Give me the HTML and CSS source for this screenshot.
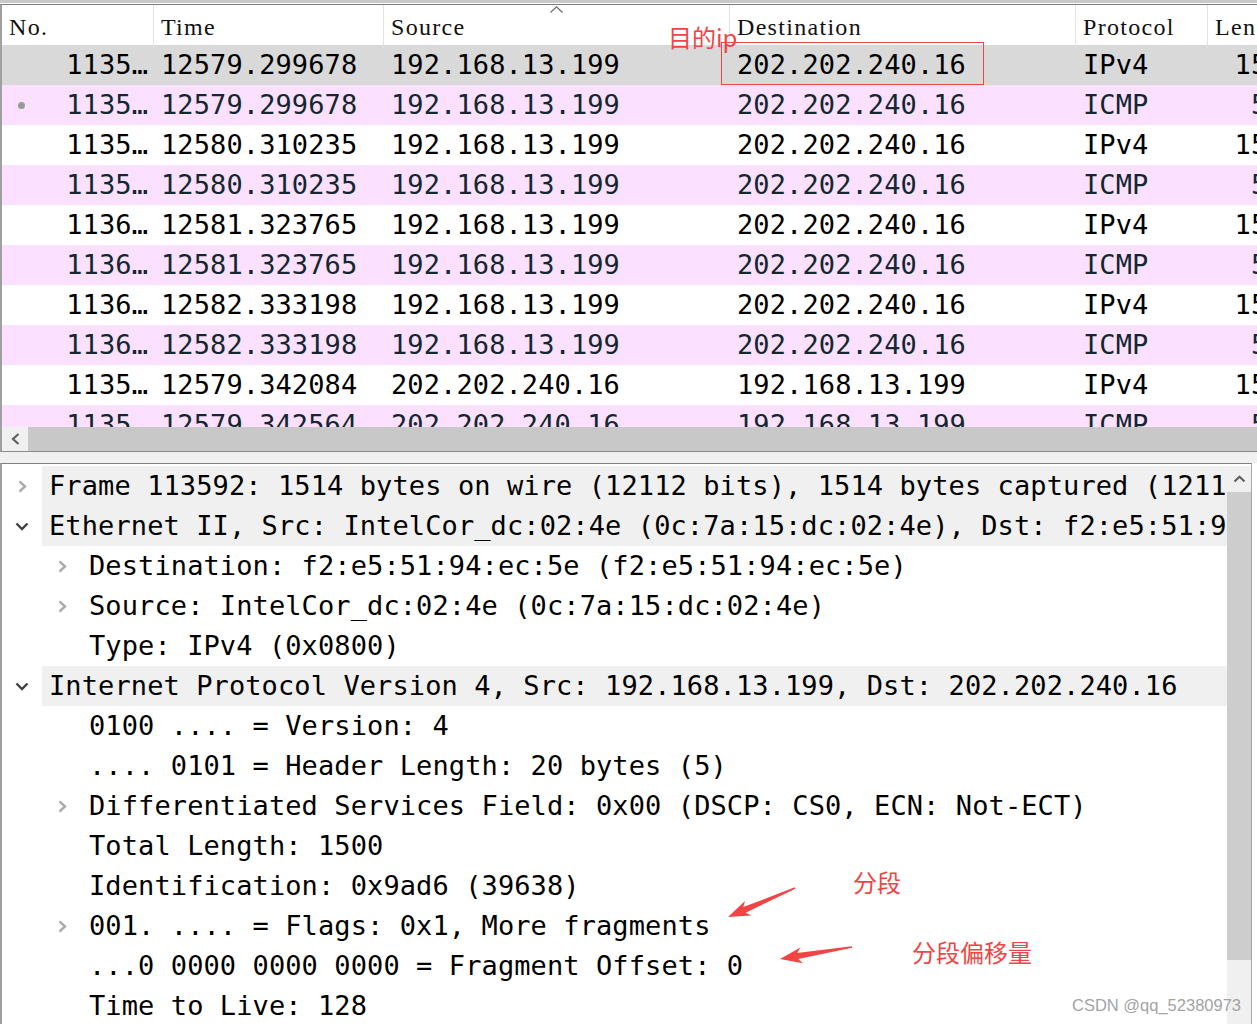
FILE: index.html
```html
<!DOCTYPE html>
<html lang="zh-CN">
<head>
    <meta charset="UTF-8">
    <title>Wireshark - IPv4 fragments</title>
    <link rel="stylesheet" href="styles.css">
</head>
<body>
    <div class="window">
        <div class="top-strip"></div>

        <!-- packet list -->
        <div class="packet-list">
            <div class="list-header">
                <div class="col">No.</div>
                <div class="col">Time</div>
                <div class="col sorted">Source
                    <svg class="sort-arrow" width="13" height="7" viewBox="0 0 13 7"><polyline points="0.5,6.5 6.5,0.8 12.5,6.5" fill="none" stroke="#6e6e6e" stroke-width="1.2"/></svg>
                </div>
                <div class="col">Destination</div>
                <div class="col">Protocol</div>
                <div class="col">Length</div>
            </div>
            <div class="list-body">
                <div class="pkt selected">
                    <span class="no">1135…</span><span>12579.299678</span><span>192.168.13.199</span><span>202.202.240.16</span><span>IPv4</span><span class="len">1514</span>
                </div>
                <div class="pkt icmp">
                    <span class="no"><i class="rel-dot"></i>1135…</span><span>12579.299678</span><span>192.168.13.199</span><span>202.202.240.16</span><span>ICMP</span><span class="len">562</span>
                </div>
                <div class="pkt">
                    <span class="no">1135…</span><span>12580.310235</span><span>192.168.13.199</span><span>202.202.240.16</span><span>IPv4</span><span class="len">1514</span>
                </div>
                <div class="pkt icmp">
                    <span class="no">1135…</span><span>12580.310235</span><span>192.168.13.199</span><span>202.202.240.16</span><span>ICMP</span><span class="len">562</span>
                </div>
                <div class="pkt">
                    <span class="no">1136…</span><span>12581.323765</span><span>192.168.13.199</span><span>202.202.240.16</span><span>IPv4</span><span class="len">1514</span>
                </div>
                <div class="pkt icmp">
                    <span class="no">1136…</span><span>12581.323765</span><span>192.168.13.199</span><span>202.202.240.16</span><span>ICMP</span><span class="len">562</span>
                </div>
                <div class="pkt">
                    <span class="no">1136…</span><span>12582.333198</span><span>192.168.13.199</span><span>202.202.240.16</span><span>IPv4</span><span class="len">1514</span>
                </div>
                <div class="pkt icmp">
                    <span class="no">1136…</span><span>12582.333198</span><span>192.168.13.199</span><span>202.202.240.16</span><span>ICMP</span><span class="len">562</span>
                </div>
                <div class="pkt">
                    <span class="no">1135…</span><span>12579.342084</span><span>202.202.240.16</span><span>192.168.13.199</span><span>IPv4</span><span class="len">1514</span>
                </div>
                <div class="pkt icmp">
                    <span class="no">1135…</span><span>12579.342564</span><span>202.202.240.16</span><span>192.168.13.199</span><span>ICMP</span><span class="len">562</span>
                </div>
            </div>
            <div class="hscroll">
                <div class="hscroll-btn">
                    <svg width="9" height="12" viewBox="0 0 9 12"><polyline points="7.5,1 2,6 7.5,11" fill="none" stroke="#606060" stroke-width="2.2"/></svg>
                </div>
                <div class="hscroll-thumb"></div>
            </div>
        </div>

        <div class="splitter"></div>

        <!-- packet details -->
        <div class="details">
            <div class="tree">
                <div class="node shaded">
                    <span class="toggle"><svg width="9" height="13" viewBox="0 0 9 13"><polyline points="1.5,1.5 7,6.5 1.5,11.5" fill="none" stroke="#ababab" stroke-width="2.4"/></svg></span>
                    <span class="label">Frame 113592: 1514 bytes on wire (12112 bits), 1514 bytes captured (12112 bits) on interface 0</span>
                </div>
                <div class="node shaded">
                    <span class="toggle"><svg width="14" height="9" viewBox="0 0 14 9"><polyline points="1.5,1.5 7,7 12.5,1.5" fill="none" stroke="#404040" stroke-width="2.4"/></svg></span>
                    <span class="label">Ethernet II, Src: IntelCor_dc:02:4e (0c:7a:15:dc:02:4e), Dst: f2:e5:51:94:ec:5e (f2:e5:51:94:ec:5e)</span>
                </div>
                <div class="node">
                    <span class="indent"></span>
                    <span class="toggle"><svg width="9" height="13" viewBox="0 0 9 13"><polyline points="1.5,1.5 7,6.5 1.5,11.5" fill="none" stroke="#ababab" stroke-width="2.4"/></svg></span>
                    <span class="label">Destination: f2:e5:51:94:ec:5e (f2:e5:51:94:ec:5e)</span>
                </div>
                <div class="node">
                    <span class="indent"></span>
                    <span class="toggle"><svg width="9" height="13" viewBox="0 0 9 13"><polyline points="1.5,1.5 7,6.5 1.5,11.5" fill="none" stroke="#ababab" stroke-width="2.4"/></svg></span>
                    <span class="label">Source: IntelCor_dc:02:4e (0c:7a:15:dc:02:4e)</span>
                </div>
                <div class="node">
                    <span class="indent"></span><span class="toggle"></span>
                    <span class="label">Type: IPv4 (0x0800)</span>
                </div>
                <div class="node shaded">
                    <span class="toggle"><svg width="14" height="9" viewBox="0 0 14 9"><polyline points="1.5,1.5 7,7 12.5,1.5" fill="none" stroke="#404040" stroke-width="2.4"/></svg></span>
                    <span class="label">Internet Protocol Version 4, Src: 192.168.13.199, Dst: 202.202.240.16</span>
                </div>
                <div class="node">
                    <span class="indent"></span><span class="toggle"></span>
                    <span class="label">0100 .... = Version: 4</span>
                </div>
                <div class="node">
                    <span class="indent"></span><span class="toggle"></span>
                    <span class="label">.... 0101 = Header Length: 20 bytes (5)</span>
                </div>
                <div class="node">
                    <span class="indent"></span>
                    <span class="toggle"><svg width="9" height="13" viewBox="0 0 9 13"><polyline points="1.5,1.5 7,6.5 1.5,11.5" fill="none" stroke="#ababab" stroke-width="2.4"/></svg></span>
                    <span class="label">Differentiated Services Field: 0x00 (DSCP: CS0, ECN: Not-ECT)</span>
                </div>
                <div class="node">
                    <span class="indent"></span><span class="toggle"></span>
                    <span class="label">Total Length: 1500</span>
                </div>
                <div class="node">
                    <span class="indent"></span><span class="toggle"></span>
                    <span class="label">Identification: 0x9ad6 (39638)</span>
                </div>
                <div class="node">
                    <span class="indent"></span>
                    <span class="toggle"><svg width="9" height="13" viewBox="0 0 9 13"><polyline points="1.5,1.5 7,6.5 1.5,11.5" fill="none" stroke="#ababab" stroke-width="2.4"/></svg></span>
                    <span class="label">001. .... = Flags: 0x1, More fragments</span>
                </div>
                <div class="node">
                    <span class="indent"></span><span class="toggle"></span>
                    <span class="label">...0 0000 0000 0000 = Fragment Offset: 0</span>
                </div>
                <div class="node">
                    <span class="indent"></span><span class="toggle"></span>
                    <span class="label">Time to Live: 128</span>
                </div>
            </div>
            <div class="vscroll">
                <div class="vscroll-btn">
                    <svg width="13" height="8" viewBox="0 0 13 8"><polyline points="1.5,6.5 6.5,1.8 11.5,6.5" fill="none" stroke="#606060" stroke-width="2.2"/></svg>
                </div>
                <div class="vscroll-thumb"></div>
            </div>
        </div>

        <!-- screenshot annotations -->
        <div class="mark-box"></div>
        <div class="note note-dst">目的ip</div>
        <div class="note note-frag">分段</div>
        <div class="note note-offset">分段偏移量</div>
        <svg class="arrows" width="1257" height="1024" viewBox="0 0 1257 1024">
            <polygon points="728,917 751.4,915.6 745.7,912.7 795.3,888.7 794.7,887.3 743.3,907.1 745,901" fill="#f24444"/>
            <polygon points="780,959 803,963.3 798.2,959 852.1,947.8 851.9,946.2 797.2,953 800.4,947.5" fill="#f24444"/>
        </svg>
        <div class="watermark">CSDN @qq_52380973</div>
    </div>
</body>
</html>
```

FILE: styles.css
```css
/* Styles */
* {
    box-sizing: border-box;
}
body {
    margin: 0;
    padding: 0;
    background-color: #ffffff;
    font-family: "DejaVu Sans Mono", monospace;
    color: #000;
}
.window {
    position: relative;
    width: 1257px;
    height: 1024px;
    overflow: hidden;
}
.top-strip {
    height: 4px;
    background-color: #c9c9c9;
    border-bottom: 1px solid #ffffff;
}

/* packet list */
.packet-list {
    border-top: 1px solid #7c7c7c;
    border-left: 2px solid #a0a0a0;
    border-bottom: 1px solid #8a8a8a;
    overflow: hidden;
}
.list-header,
.pkt {
    display: grid;
    grid-template-columns: 152px 230px 346px 346px 132px 100px;
    width: 1306px;
    height: 40px;
    white-space: nowrap;
}
.list-header {
    font-family: "Liberation Serif", serif;
    font-size: 24px;
    letter-spacing: 1.3px;
    color: #111;
}
.list-header .col {
    position: relative;
    padding-left: 7px;
    line-height: 44px;
    border-right: 1px solid #e3e3e3;
    overflow: hidden;
}
.list-header .col.sorted {
    overflow: visible;
}
.sort-arrow {
    position: absolute;
    top: 1px;
    left: 166px;
}
.list-body {
    height: 382px;
    overflow: hidden;
}
.pkt {
    font-size: 27px;
    letter-spacing: 0.1px;
    line-height: 40px;
}
.pkt > span {
    padding-left: 7px;
    overflow: hidden;
}
.pkt .no {
    display: flex;
    align-items: center;
    justify-content: flex-end;
    padding: 0 6px 0 0;
}
.pkt .len {
    text-align: right;
    padding-right: 8px;
}
.rel-dot {
    width: 7px;
    height: 7px;
    margin: 0 auto 0 16px;
    border-radius: 50%;
    background-color: #9a9a9a;
}
.pkt.icmp {
    background-color: #fce0ff;
    color: #12272e;
}
.pkt.selected {
    background-color: #d9d9d9;
}
.hscroll {
    display: flex;
    height: 24px;
}
.hscroll-btn {
    width: 26px;
    background-color: #f0f0f0;
    display: flex;
    align-items: center;
    justify-content: center;
}
.hscroll-thumb {
    flex: 1;
    background-color: #c8c8c8;
}
.splitter {
    height: 11px;
    background-color: #f0f0f0;
}

/* packet details */
.details {
    display: flex;
    width: 1252px;
    height: 561px;
    border-top: 1px solid #828282;
    border-left: 2px solid #a0a0a0;
    border-right: 1px solid #a8a8a8;
}
.tree {
    flex: 1;
    min-width: 0;
    padding-top: 2px;
    overflow: hidden;
    font-size: 27px;
    letter-spacing: 0.1px;
}
.node {
    display: flex;
    height: 40px;
    line-height: 40px;
    white-space: nowrap;
}
.indent,
.toggle {
    flex: 0 0 40px;
}
.toggle {
    display: flex;
    align-items: center;
    justify-content: center;
}
.label {
    flex: 1;
    min-width: 0;
    padding-left: 7px;
    overflow: hidden;
}
.node.shaded .label {
    background-color: #f0f0f0;
}
.vscroll {
    width: 24px;
    margin-top: 2px;
    background-color: #f0f0f0;
    display: flex;
    flex-direction: column;
}
.vscroll-btn {
    height: 26px;
    display: flex;
    align-items: center;
    justify-content: center;
}
.vscroll-thumb {
    height: 468px;
    background-color: #cdcdcd;
}

/* annotations drawn over the screenshot */
.mark-box {
    position: absolute;
    left: 721px;
    top: 42px;
    width: 263px;
    height: 43px;
    border: 1px solid #e84848;
}
.note {
    position: absolute;
    font-family: "Noto Sans CJK SC", sans-serif;
    font-size: 24px;
    line-height: 24px;
    color: #f24444;
    white-space: nowrap;
}
.note-dst {
    left: 668px;
    top: 25px;
}
.note-frag {
    left: 853px;
    top: 870px;
}
.note-offset {
    left: 912px;
    top: 940px;
}
.arrows {
    position: absolute;
    left: 0;
    top: 0;
}
.watermark {
    position: absolute;
    left: 1072px;
    top: 995px;
    font-family: "Liberation Sans", sans-serif;
    font-size: 16.5px;
    line-height: 20px;
    color: #a3a3a3;
}
```
